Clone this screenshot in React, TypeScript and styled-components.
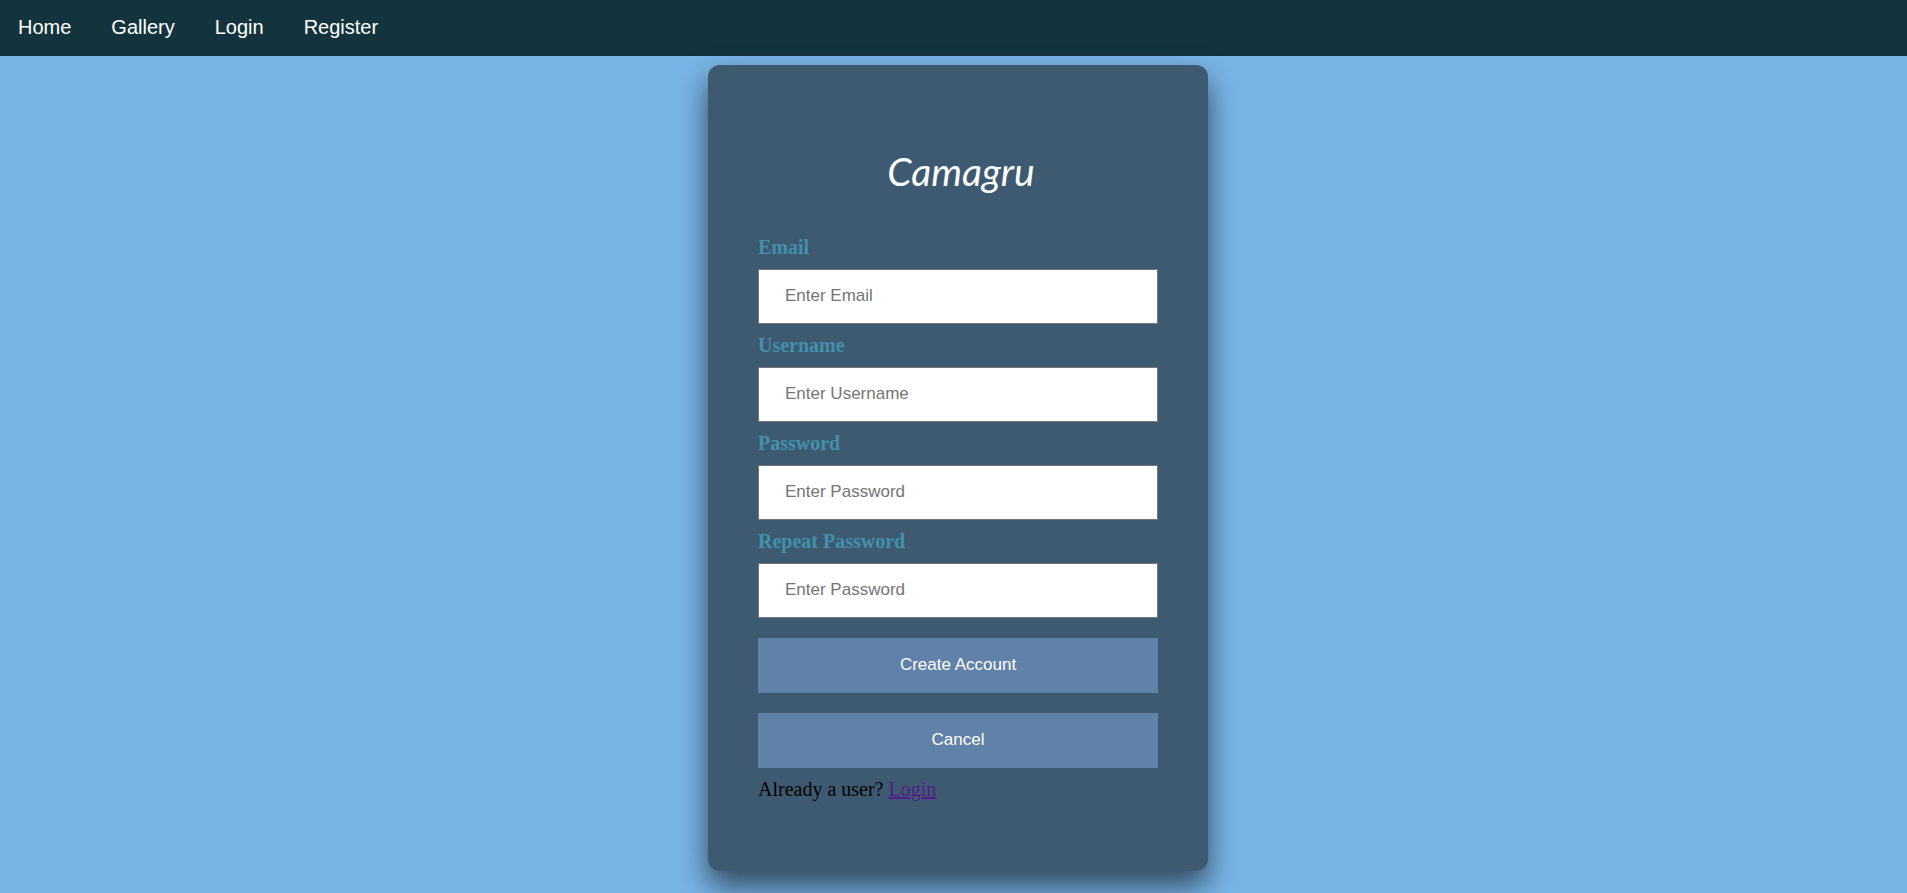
import React from "react";
import styled, { createGlobalStyle } from "styled-components";

const GlobalStyle = createGlobalStyle`
  body {
    margin: 0;
    background: #79b4e7;
    color: #000;
    font-family: "Liberation Serif", "Times New Roman", serif;
    font-size: 20px;
    line-height: 23px;
  }
`;

const Nav = styled.nav`
  display: flex;
  gap: 40px;
  height: 56px;
  padding: 0 18px;
  background: #14343d;
`;

const NavLink = styled.a`
  padding: 16px 0;
  color: #fff;
  font-family: "Liberation Sans", Arial, sans-serif;
  text-decoration: none;
`;

const Main = styled.main`
  display: flex;
  justify-content: center;
  padding: 9px 0 22px 9px;
`;

const Card = styled.form`
  display: flex;
  flex-direction: column;
  box-sizing: border-box;
  width: 100%;
  max-width: 500px;
  padding: 70px 50px;
  border-radius: 12px;
  background: #3d5a71;
  box-shadow: 0 15px 30px rgba(0, 0, 0, 0.6);
`;

const Brand = styled.h1`
  margin: 0;
  padding: 6px 0 35px 6px;
  color: #fff;
  font-family: Lato, cursive;
  font-size: 39px;
  font-style: italic;
  font-weight: 400;
  line-height: 60px;
  text-align: center;
`;

const Label = styled.label`
  color: #4390ad;
  font-weight: bold;
`;

const Input = styled.input`
  box-sizing: border-box;
  width: 100%;
  height: 55px;
  margin: 10px 0;
  padding: 15px 26px 17px;
  border: 1px solid #767676;
  background: #fff;
  font-family: "Liberation Sans", Arial, sans-serif;
  font-size: 17px;

  &::placeholder {
    color: #757575;
  }
`;

const ButtonGroup = styled.div`
  display: flex;
  flex-direction: column;
`;

const Button = styled.button`
  height: 55px;
  margin: 10px 0;
  padding: 15px 26px 17px;
  border: 0;
  background: #6082a9;
  color: #fff;
  font-family: "Liberation Sans", Arial, sans-serif;
  font-size: 17px;
  cursor: pointer;
`;

const Footnote = styled.p`
  margin: 0;
`;

const LoginLink = styled.a`
  color: #551a8b;
`;

const links = ["Home", "Gallery", "Login", "Register"];

const fields = [
  { id: "email", label: "Email", type: "email", placeholder: "Enter Email" },
  { id: "username", label: "Username", type: "text", placeholder: "Enter Username" },
  { id: "password", label: "Password", type: "password", placeholder: "Enter Password" },
  { id: "repeat", label: "Repeat Password", type: "password", placeholder: "Enter Password" },
];

export default function App() {
  return (
    <>
      <GlobalStyle />
      <Nav>
        {links.map((name) => (
          <NavLink key={name} href={`#${name.toLowerCase()}`}>
            {name}
          </NavLink>
        ))}
      </Nav>
      <Main>
        <Card onSubmit={(event) => event.preventDefault()}>
          <Brand>Camagru</Brand>
          {fields.map(({ id, label, type, placeholder }) => (
            <React.Fragment key={id}>
              <Label htmlFor={id}>{label}</Label>
              <Input id={id} name={id} type={type} placeholder={placeholder} />
            </React.Fragment>
          ))}
          <ButtonGroup>
            <Button type="submit">Create Account</Button>
            <Button type="button">Cancel</Button>
          </ButtonGroup>
          <Footnote>
            Already a user? <LoginLink href="#login">Login</LoginLink>
          </Footnote>
        </Card>
      </Main>
    </>
  );
}
